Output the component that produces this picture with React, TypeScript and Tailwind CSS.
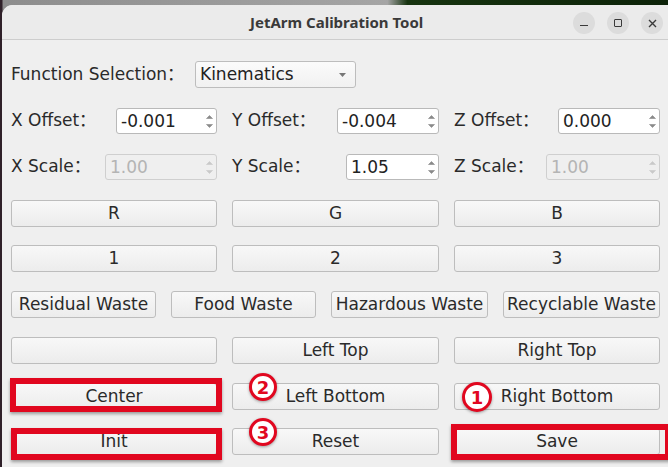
import React from "react";

const font = { fontFamily: '"DejaVu Sans", "Noto Sans CJK SC", sans-serif' };

function Arrows({ disabled }: { disabled?: boolean }) {
  const c = disabled ? "#c9c9c9" : "#8a8a8a";
  return (
    <div className="flex w-[14px] flex-col items-center justify-center gap-[5px]">
      <svg width="7" height="4" viewBox="0 0 7 4">
        <path d="M0.5 3.5 L3.5 0.5 L6.5 3.5 Z" fill={c} stroke={c} strokeWidth="0.6" />
      </svg>
      <svg width="7" height="4" viewBox="0 0 7 4">
        <path d="M0.5 0.5 L3.5 3.5 L6.5 0.5 Z" fill={c} stroke={c} strokeWidth="0.6" />
      </svg>
    </div>
  );
}

function SpinBox({ value, w, disabled }: { value: string; w: string; disabled?: boolean }) {
  return (
    <div
      className={`flex h-[26px] ${w} rounded-[3px] border ${
        disabled ? "border-[#cfcfcf] bg-[#efefef] text-[#b4b4b4]" : "border-[#b9b9b9] bg-white text-[#222]"
      }`}
    >
      <span className="flex-1 pl-[4px] text-[17px] leading-[24px]">{value}</span>
      <Arrows disabled={disabled} />
    </div>
  );
}

function Btn({ children, className = "" }: { children?: React.ReactNode; className?: string }) {
  return (
    <div
      className={`flex h-[27px] items-center justify-center rounded-[3px] border border-[#bdbdbd] bg-[linear-gradient(#f8f8f8,#ececec)] text-[17px] text-[#2a2a2a] ${className}`}
    >
      {children}
    </div>
  );
}

function Label({ children }: { children: React.ReactNode }) {
  return <span className="text-[17px] text-[#2a2a2a]">{children}</span>;
}

function Badge({ n, className }: { n: string; className: string }) {
  return (
    <div
      className={`absolute flex items-center justify-center rounded-full border-[3px] border-[#e1071f] bg-white text-[18px] font-bold text-[#e1071f] shadow-[0_1px_3px_rgba(0,0,0,0.35)] ${className}`}
    >
      {n}
    </div>
  );
}

export default function App() {
  return (
    <div
      className="relative h-[467px] w-[668px] overflow-hidden bg-[linear-gradient(90deg,#2f2029_0px,#2f2029_2px,#8d8d8d_3px,#a5a5a5_58%,#173410_61%,#0c2208_100%)] pl-[2px] pt-[5px]"
      style={font}
    >
      <div className="h-[480px] w-[680px] overflow-hidden rounded-t-[11px] bg-[#efefef]">
        {/* title bar */}
        <div className="relative flex h-[35px] items-center border-b border-[#cdcdcd] bg-[#ebebeb] pl-[248px]">
          <span className="text-[15px] font-bold text-[#3a3a3a]" style={{ fontFamily: '"Noto Sans", sans-serif' }}>
            JetArm Calibration Tool
          </span>
          <div className="absolute left-[571px] top-[7px] flex gap-[12px]">
            <div className="flex h-[22px] w-[22px] items-center justify-center rounded-full bg-[#dcdcdc]">
              <div className="mt-[5px] h-[1.5px] w-[8px] bg-[#3a3a3a]" />
            </div>
            <div className="flex h-[22px] w-[22px] items-center justify-center rounded-full bg-[#dcdcdc]">
              <div className="h-[8px] w-[8px] rounded-[1px] border-[1.5px] border-[#3a3a3a]" />
            </div>
            <div className="flex h-[22px] w-[22px] items-center justify-center rounded-full bg-[#dcdcdc]">
              <svg width="9" height="9" viewBox="0 0 9 9">
                <path d="M1 1 L8 8 M8 1 L1 8" stroke="#3a3a3a" strokeWidth="1.4" />
              </svg>
            </div>
          </div>
        </div>

        {/* body */}
        <div className="relative pl-[9px] pt-[21px]">
          <div className="flex h-[27px] items-center">
            <div className="w-[184px]">
              <Label>Function Selection：</Label>
            </div>
            <div className="flex h-[27px] w-[161px] items-center justify-between rounded-[3px] border border-[#bdbdbd] bg-[linear-gradient(#fbfbfb,#f1f1f1)] pl-[4px] pr-[9px]">
              <span className="text-[17px] text-[#222]">Kinematics</span>
              <svg width="7" height="4" viewBox="0 0 7 4">
                <path d="M0 0 L7 0 L3.5 4 Z" fill="#777" />
              </svg>
            </div>
          </div>

          <div className="mt-[20px] grid grid-cols-[206px_207px_206px] gap-x-[15px]">
            <div className="flex items-center justify-between">
              <Label>X Offset：</Label>
              <SpinBox value="-0.001" w="w-[101px]" />
            </div>
            <div className="flex items-center justify-between">
              <Label>Y Offset：</Label>
              <SpinBox value="-0.004" w="w-[102px]" />
            </div>
            <div className="flex items-center justify-between">
              <Label>Z Offset：</Label>
              <SpinBox value="0.000" w="w-[102px]" />
            </div>
          </div>

          <div className="mt-[20px] grid grid-cols-[206px_207px_206px] gap-x-[15px]">
            <div className="flex items-center justify-between">
              <Label>X Scale：</Label>
              <SpinBox value="1.00" w="w-[112px]" disabled />
            </div>
            <div className="flex items-center justify-between">
              <Label>Y Scale：</Label>
              <SpinBox value="1.05" w="w-[93px]" />
            </div>
            <div className="flex items-center justify-between">
              <Label>Z Scale：</Label>
              <SpinBox value="1.00" w="w-[114px]" disabled />
            </div>
          </div>

          <div className="mt-[20px] grid grid-cols-[206px_207px_206px] gap-x-[15px]">
            <Btn>R</Btn>
            <Btn>G</Btn>
            <Btn>B</Btn>
          </div>

          <div className="mt-[18px] grid grid-cols-[206px_207px_206px] gap-x-[15px]">
            <Btn>1</Btn>
            <Btn>2</Btn>
            <Btn>3</Btn>
          </div>

          <div className="mt-[19px] grid grid-cols-[145px_145px_157px_157px] gap-x-[15px]">
            <Btn>Residual Waste</Btn>
            <Btn>Food Waste</Btn>
            <Btn>Hazardous Waste</Btn>
            <Btn>Recyclable Waste</Btn>
          </div>

          <div className="mt-[19px] grid grid-cols-[206px_207px_206px] gap-x-[15px]">
            <Btn />
            <Btn>Left Top</Btn>
            <Btn>Right Top</Btn>
          </div>

          <div className="mt-[19px] grid grid-cols-[206px_207px_206px] gap-x-[15px]">
            <Btn>Center</Btn>
            <Btn>Left Bottom</Btn>
            <Btn>Right Bottom</Btn>
          </div>

          <div className="mt-[18px] grid grid-cols-[206px_207px_206px] gap-x-[15px]">
            <Btn>Init</Btn>
            <Btn>Reset</Btn>
            <Btn>Save</Btn>
          </div>

          {/* annotations */}
          <div className="absolute left-[8px] top-[338px] h-[34px] w-[212px] border-[6px] border-[#e1071f] shadow-[0_2px_3px_rgba(0,0,0,0.35)]" />
          <div className="absolute left-[9px] top-[388px] h-[32px] w-[211px] border-[6px] border-[#e1071f] shadow-[0_2px_3px_rgba(0,0,0,0.35)]" />
          <div className="absolute left-[449px] top-[384px] h-[36px] w-[220px] border-[6px] border-[#e1071f] shadow-[0_2px_3px_rgba(0,0,0,0.35)]" />
          <Badge n="2" className="left-[247px] top-[333px] h-[28px] w-[28px]" />
          <Badge n="3" className="left-[247px] top-[378px] h-[28px] w-[28px]" />
          <Badge n="1" className="left-[460px] top-[342px] h-[30px] w-[30px]" />
        </div>
      </div>
    </div>
  );
}
